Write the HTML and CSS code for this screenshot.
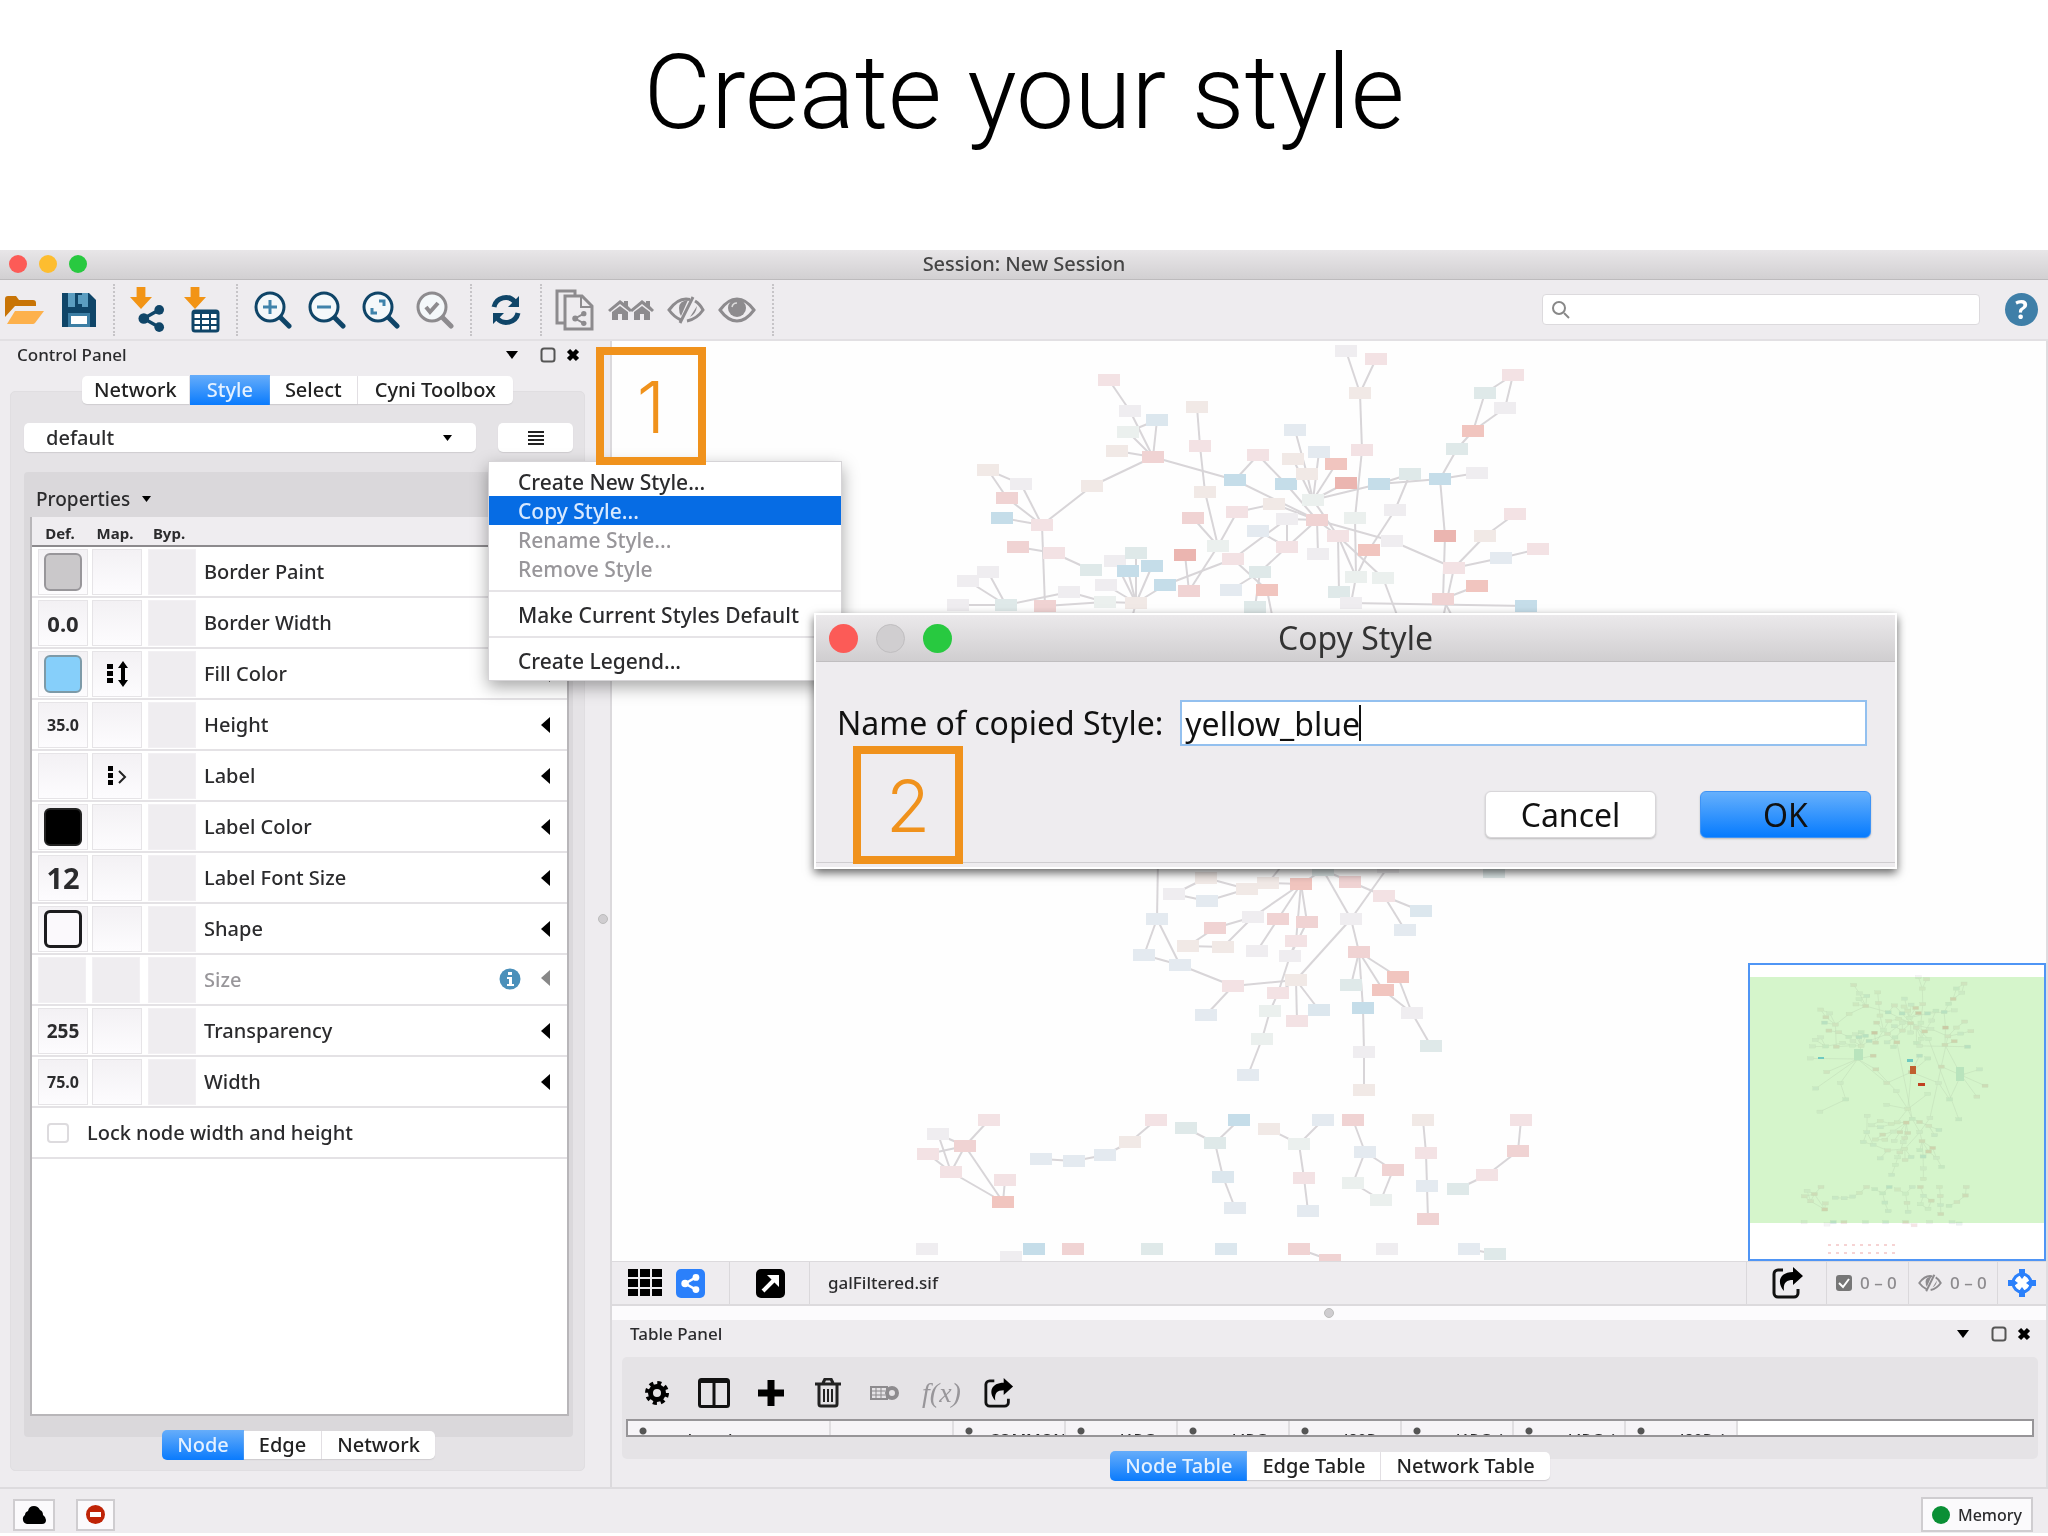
FILE: index.html
```html
<!DOCTYPE html>
<html lang="en">
<head>
<meta charset="utf-8">
<title>Create your style</title>
<link rel="stylesheet" href="styles.css">
</head>
<body>
<svg class="defs" aria-hidden="true">
  <defs>
    <symbol id="i-down" viewBox="0 0 12 8"><path d="M0 0h12L6 8z"/></symbol>
    <symbol id="i-left" viewBox="0 0 9 16"><path d="M9 0v16L0 8z"/></symbol>
    <symbol id="i-float" viewBox="0 0 16 16"><rect x="1.500" y="1.500" width="13" height="13" rx="2.500" fill="none" stroke="#555" stroke-width="2"/></symbol>
    <symbol id="i-close" viewBox="0 0 14 14"><path d="M2.500 2.500l9 9M11.500 2.500l-9 9" stroke="#000" stroke-width="4.500"/></symbol>
    <symbol id="i-lens" viewBox="0 0 38 38"><circle cx="16" cy="16" r="14" fill="#f4f8fa" stroke="currentColor" stroke-width="3"/><path d="M27 27l8 8" stroke="currentColor" stroke-width="5" stroke-linecap="round"/></symbol>
    <symbol id="i-eye" viewBox="0 0 38 26"><path d="M2 13Q10 2 19 2t17 11Q28 24 19 24T2 13z" fill="none" stroke="currentColor" stroke-width="3"/><circle cx="19" cy="11" r="9" fill="currentColor"/><path d="M14 10a5 5 0 0 1 5-4" fill="none" stroke="#ddd" stroke-width="1.500"/></symbol>
    <symbol id="i-eyeoff" viewBox="0 0 38 28"><path d="M14 24Q7 21 2 14 10 3 19 3l4 .5" fill="none" stroke="currentColor" stroke-width="3"/><path d="M28 5Q33 8 36 14 30 23 20 25" fill="none" stroke="currentColor" stroke-width="3"/><path d="M21 4q-9 1-9 8 0 5 2 8zM30 10q-1 8-7 11z" fill="currentColor"/><path d="M26 1L13 27" stroke="currentColor" stroke-width="3"/></symbol>
    <symbol id="i-export" viewBox="0 0 32 32"><path d="M11 3H6a4 4 0 0 0-4 4v19a4 4 0 0 0 4 4h16a4 4 0 0 0 4-4v-4" fill="none" stroke="#111" stroke-width="3"/><path d="M21 0l10 9-10 9v-5c-7 0-10 3-9 11-8-9-4-19 9-19z" fill="#000"/></symbol>
    <symbol id="i-share" viewBox="0 0 28 28"><path d="M22 5L6 14l16 9" fill="none" stroke="currentColor" stroke-width="3.500"/><circle cx="22" cy="5" r="5" fill="currentColor"/><circle cx="6" cy="14" r="5.500" fill="currentColor"/><circle cx="22" cy="23" r="5" fill="currentColor"/></symbol>
    <symbol id="i-house" viewBox="0 0 24 20"><path d="M0 10L12 0l4 3V1h4v5l4 4-2 2L12 4 2 12z"/><path d="M4 12l8-6 8 6v8h-6v-6h-4v6H4z"/></symbol>
    <symbol id="i-arrow" viewBox="0 0 20 20"><path d="M6 0h8v9h6L10 20 0 9h6z" fill="#f29415"/></symbol>
  </defs>
</svg>

<main class="slide">
  <h1 class="slide-title">Create your style</h1>

  <section class="app" aria-label="Session: New Session">
    <header class="titlebar">
      <div class="lights"><i class="light red"></i><i class="light amber"></i><i class="light green"></i></div>
      <span class="titlebar-text">Session: New Session</span>
    </header>

    <div class="toolbar">
      <div class="tools tools-file">
        <button class="tool" aria-label="Open"><svg width="40" height="30"><path d="M1 22V4q0-3 3-3h8l3 4h14q3 0 3 3v3H11z" fill="#c87406"/><path d="M3 29l8-13h29l-9 12q-1 1-2 1z" fill="#fdb14c"/></svg></button>
        <button class="tool" aria-label="Save"><svg width="36" height="36"><path d="M1 1h27l7 7v27H1z" fill="#0f4568"/><path d="M7 1h20v14H7z" fill="#5b9dc0"/><path d="M14 1h7v14h-7z" fill="#0f4568"/><path d="M17 3h4v9h-4z" fill="#5b9dc0"/><path d="M7 21h22v14H7z" fill="#3c7ea4"/><path d="M10 24h16v8H10z" fill="#fff"/></svg></button>
      </div>
      <div class="tools">
        <button class="tool" aria-label="Import network"><svg width="36" height="46"><use href="#i-arrow" width="22" height="22"/><use href="#i-share" x="8" y="18" width="27" height="27" color="#0f4568"/></svg></button>
        <button class="tool" aria-label="Import table"><svg width="36" height="46"><use href="#i-arrow" width="22" height="22"/><rect x="9" y="24" width="25" height="20" rx="2" fill="#fff" stroke="#0f4568" stroke-width="3"/><path d="M9 26h25M9 32h25M9 38h25M17 25v19M26 25v19" stroke="#0f4568" stroke-width="2"/></svg></button>
      </div>
      <div class="tools">
        <button class="tool navy" aria-label="Zoom in"><svg width="38" height="38"><use href="#i-lens"/><path d="M16 9v14M9 16h14" stroke="#3f83ab" stroke-width="3"/></svg></button>
        <button class="tool navy" aria-label="Zoom out"><svg width="38" height="38"><use href="#i-lens"/><path d="M9 16h14" stroke="#3f83ab" stroke-width="3"/></svg></button>
        <button class="tool navy" aria-label="Zoom to fit"><svg width="38" height="38"><use href="#i-lens"/><path d="M17 10h5v5M10 17v5h5" fill="none" stroke="#3f83ab" stroke-width="3"/></svg></button>
        <button class="tool gray" aria-label="Zoom selected"><svg width="38" height="38"><use href="#i-lens"/><path d="M10 16l4 5 8-9" fill="none" stroke="#8d8b8e" stroke-width="4"/></svg></button>
      </div>
      <div class="tools">
        <button class="tool navy" aria-label="Refresh"><svg width="30" height="30"><path d="M3 12A12 12 0 0 1 24 7M27 18A12 12 0 0 1 6 23" fill="none" stroke="currentColor" stroke-width="5"/><path d="M28 1v11H17zM2 29V18h11z" fill="currentColor"/></svg></button>
      </div>
      <div class="tools">
        <button class="tool gray" aria-label="New network from selection"><svg width="40" height="42"><path d="M10 34H2V2h18v5" fill="none" stroke="currentColor" stroke-width="3"/><path d="M10 7h17l10 10v23H10z" fill="#eeecef" stroke="currentColor" stroke-width="3"/><path d="M26 8v10h11" fill="none" stroke="currentColor" stroke-width="2"/><use href="#i-share" x="17" y="22" width="15" height="15"/></svg></button>
        <button class="tool gray" aria-label="First neighbors"><svg width="46" height="22" fill="currentColor"><use href="#i-house" width="24" height="22"/><use href="#i-house" x="22" width="24" height="22"/></svg></button>
        <button class="tool gray" aria-label="Hide selected"><svg width="38" height="28"><use href="#i-eyeoff"/></svg></button>
        <button class="tool gray" aria-label="Show all"><svg width="38" height="26"><use href="#i-eye"/></svg></button>
      </div>
      <div class="toolbar-end">
        <label class="search"><svg width="20" height="20"><circle cx="8" cy="8" r="6" fill="none" stroke="#888" stroke-width="2"/><path d="M13 13l5 5" stroke="#888" stroke-width="2"/></svg><input type="search" aria-label="Search"></label>
        <button class="help" aria-label="Help">?</button>
      </div>
    </div>

    <div class="workspace">
      <aside class="control-panel">
        <div class="panel-head">
          <span>Control Panel</span>
          <span class="panel-tools"><svg width="12" height="8"><use href="#i-down"/></svg><svg class="float" width="16" height="16"><use href="#i-float"/></svg><svg width="14" height="14"><use href="#i-close"/></svg></span>
        </div>
        <nav class="tabs top-tabs">
          <button class="tab">Network</button><button class="tab active">Style</button><button class="tab">Select</button><button class="tab">Cyni Toolbox</button>
        </nav>
        <div class="group">
          <div class="style-row">
            <div class="combo"><select aria-label="Style"><option>default</option></select><svg width="9" height="6"><use href="#i-down"/></svg></div>
            <div class="menu-anchor">
              <button class="menu-button" aria-label="Options"><svg width="16" height="14"><path d="M0 1h16M0 5h16M0 9h16M0 13h16" stroke="#222" stroke-width="2"/></svg></button>
              <div class="popup" role="menu">
                <button role="menuitem">Create New Style...</button>
                <button role="menuitem" class="selected">Copy Style...</button>
                <button role="menuitem" disabled>Rename Style...</button>
                <button role="menuitem" disabled>Remove Style</button>
                <hr>
                <button role="menuitem">Make Current Styles Default</button>
                <hr>
                <button role="menuitem">Create Legend...</button>
              </div>
            </div>
          </div>

          <div class="properties">
            <div class="properties-head">Properties <svg width="9" height="6"><use href="#i-down"/></svg></div>
            <div class="list">
              <table class="props">
                <thead><tr><th>Def.</th><th>Map.</th><th>Byp.</th><th></th><th></th></tr></thead>
                <tbody>
                  <tr><td><span class="cell"><i class="swatch silver"></i></span></td><td><span class="cell"></span></td><td><span class="cell flat"></span></td><td>Border Paint</td><td><svg width="9" height="16"><use href="#i-left"/></svg></td></tr>
                  <tr><td><span class="cell n20">0.0</span></td><td><span class="cell"></span></td><td><span class="cell flat"></span></td><td>Border Width</td><td><svg width="9" height="16"><use href="#i-left"/></svg></td></tr>
                  <tr><td><span class="cell"><i class="swatch sky"></i></span></td><td><span class="cell"><svg width="24" height="26"><path d="M2 3h6v5H2zM2 10h6v5H2zM2 17h6v5H2zM13 7l5-7 5 7h-3v12h3l-5 7-5-7h3V7z"/></svg></span></td><td><span class="cell flat"></span></td><td>Fill Color</td><td><svg width="9" height="16"><use href="#i-left"/></svg></td></tr>
                  <tr><td><span class="cell n16">35.0</span></td><td><span class="cell"></span></td><td><span class="cell flat"></span></td><td>Height</td><td><svg width="9" height="16"><use href="#i-left"/></svg></td></tr>
                  <tr><td><span class="cell"></span></td><td><span class="cell"><svg width="22" height="22"><path d="M2 1h5v5H2zM2 8h5v5H2zM2 15h5v5H2z"/><path d="M13 6l6 6-6 6" fill="none" stroke="#222" stroke-width="2"/></svg></span></td><td><span class="cell flat"></span></td><td>Label</td><td><svg width="9" height="16"><use href="#i-left"/></svg></td></tr>
                  <tr><td><span class="cell"><i class="swatch black"></i></span></td><td><span class="cell"></span></td><td><span class="cell flat"></span></td><td>Label Color</td><td><svg width="9" height="16"><use href="#i-left"/></svg></td></tr>
                  <tr><td><span class="cell n26">12</span></td><td><span class="cell"></span></td><td><span class="cell flat"></span></td><td>Label Font Size</td><td><svg width="9" height="16"><use href="#i-left"/></svg></td></tr>
                  <tr><td><span class="cell"><i class="swatch outline"></i></span></td><td><span class="cell"></span></td><td><span class="cell flat"></span></td><td>Shape</td><td><svg width="9" height="16"><use href="#i-left"/></svg></td></tr>
                  <tr class="off"><td><span class="cell flat"></span></td><td><span class="cell flat"></span></td><td><span class="cell flat"></span></td><td>Size</td><td><svg class="info" width="22" height="22"><circle cx="11" cy="11" r="10.500" fill="#4b90ba"/><path d="M9 4h4v3H9zM8 9h5v7h2v2H8v-2h2v-5H8z" fill="#fff"/></svg><svg width="9" height="16"><use href="#i-left"/></svg></td></tr>
                  <tr><td><span class="cell n18">255</span></td><td><span class="cell"></span></td><td><span class="cell flat"></span></td><td>Transparency</td><td><svg width="9" height="16"><use href="#i-left"/></svg></td></tr>
                  <tr><td><span class="cell n16">75.0</span></td><td><span class="cell"></span></td><td><span class="cell flat"></span></td><td>Width</td><td><svg width="9" height="16"><use href="#i-left"/></svg></td></tr>
                </tbody>
              </table>
              <label class="lock"><input type="checkbox"> Lock node width and height</label>
            </div>
          </div>
          <nav class="tabs bottom-tabs">
            <button class="tab active">Node</button><button class="tab">Edge</button><button class="tab">Network</button>
          </nav>
        </div>
        <i class="grip grip-v"></i>
      </aside>

      <div class="main">
        <div class="canvas">
          <svg class="network" viewBox="612 342 1434 920" preserveAspectRatio="xMinYMin slice"><g id="graph"></g></svg>
          <div class="overview">
            <svg viewBox="0 0 294 294"><rect y="12" width="294" height="246" fill="#d5f5cb"/><use href="#graph" class="mini" transform="translate(-199 -84) scale(.273)"/><path d="M160 101h6v8h-6z" fill="#c06030"/><path d="M168 118h7v3h-7z" fill="#c04020"/><path d="M157 94h6v3h-6zM68 92h6v2h-6z" fill="#6fc9c0"/><path d="M206 102h8v14h-8zM104 84h9v11h-9z" fill="#b9e4bd"/><path d="M78 280h70M78 288h70" stroke="#f6d3d3" stroke-width="2" stroke-dasharray="3 5"/></svg>
          </div>
        </div>
        <div class="network-bar">
          <div class="bar-seg views">
            <button class="tool" aria-label="Grid"><svg width="34" height="28"><path d="M0 0h10v8H0zM12 0h10v8H12zM24 0h10v8H24zM0 10h10v8H0zM12 10h10v8H12zM24 10h10v8H24zM0 20h10v7H0zM12 20h10v7H12zM24 20h10v7H24z"/></svg></button>
            <button class="tool" aria-label="View"><svg width="29" height="29"><rect width="29" height="29" rx="5" fill="#2b80fb"/><use href="#i-share" x="5" y="5" width="19" height="19" color="#fff"/></svg></button>
          </div>
          <div class="bar-seg detach"><button class="tool" aria-label="Detach"><svg width="29" height="29"><rect width="29" height="29" rx="5"/><path d="M7 22L18 11" stroke="#fff" stroke-width="4"/><path d="M11 6h12v12z" fill="#fff"/></svg></button></div>
          <span class="network-name">galFiltered.sif</span>
          <div class="bar-seg export"><button class="tool" aria-label="Export"><svg width="32" height="32"><use href="#i-export"/></svg></button></div>
          <div class="bar-seg counts"><svg width="16" height="16"><rect width="16" height="16" rx="3" fill="#777"/><path d="M3 8l4 4 6-8" fill="none" stroke="#fff" stroke-width="2"/></svg><span>0 – 0</span></div>
          <div class="bar-seg counts hidden-counts"><svg width="24" height="18"><use href="#i-eyeoff"/></svg><span>0 – 0</span></div>
          <div class="bar-seg target"><button class="tool" aria-label="Birds eye"><svg width="30" height="30"><circle cx="15" cy="15" r="9" fill="#fff" stroke="#2b80fb" stroke-width="3"/><path d="M12 1h6v6l-3 4-3-4zM12 29h6v-6l-3-4-3 4zM1 12v6h6l4-3-4-3zM29 12v6h-6l-4-3 4-3z" fill="#2b80fb"/></svg></button></div>
        </div>
        <div class="splitter"><i class="grip"></i></div>

        <section class="table-panel">
          <div class="panel-head">
            <span>Table Panel</span>
            <span class="panel-tools"><svg width="12" height="8"><use href="#i-down"/></svg><svg class="float" width="16" height="16"><use href="#i-float"/></svg><svg width="14" height="14"><use href="#i-close"/></svg></span>
          </div>
          <div class="table-group">
            <div class="table-tools">
              <button class="tool" aria-label="Settings"><svg width="24" height="24"><circle cx="12" cy="12" r="6.500" fill="none" stroke="#000" stroke-width="5"/><circle cx="12" cy="12" r="10" fill="none" stroke="#000" stroke-width="4" stroke-dasharray="4 3.850"/></svg></button>
              <button class="tool" aria-label="Columns"><svg width="32" height="30"><rect x="1.500" y="1.500" width="29" height="27" rx="2" fill="none" stroke="#111" stroke-width="3"/><path d="M1 3h30" stroke="#111" stroke-width="4"/><path d="M16 3v26" stroke="#111" stroke-width="3"/></svg></button>
              <button class="tool" aria-label="Add"><svg width="26" height="26"><path d="M13 0v26M0 13h26" stroke="#000" stroke-width="7"/></svg></button>
              <button class="tool" aria-label="Delete"><svg width="26" height="30"><path d="M0 6h26M8 5l2-4h6l2 4M4 7v19q0 2 2 2h14q2 0 2-2V7" fill="none" stroke="#222" stroke-width="3"/><path d="M9 11v13M13 11v13M17 11v13" stroke="#222" stroke-width="2"/></svg></button>
              <button class="tool gray" aria-label="Delete table"><svg width="30" height="14"><rect x="1" y="1" width="16" height="12" fill="none" stroke="currentColor" stroke-width="2"/><path d="M1 5h14M1 9h14M6 1v12M11 1v12" stroke="currentColor"/><circle cx="22" cy="7" r="5" fill="#e5e3e6" stroke="currentColor" stroke-width="4"/></svg></button>
              <button class="tool fx">f(x)</button>
              <button class="tool" aria-label="Export table"><svg width="32" height="30"><use href="#i-export"/></svg></button>
            </div>
            <div class="sheet">
              <table>
                <thead><tr><th class="c-name">shared name</th><th class="c-blank"></th><th class="c-col">COMMON</th><th class="c-col">gal1RG</th><th class="c-col">gal4RG</th><th class="c-col">gal80R</th><th class="c-col">gal1RGsig</th><th class="c-col">gal4RGsig</th><th class="c-col">gal80Rsig</th><th class="c-rest"></th></tr></thead>
              </table>
            </div>
          </div>
          <nav class="tabs table-tabs">
            <button class="tab active">Node Table</button><button class="tab">Edge Table</button><button class="tab">Network Table</button>
          </nav>
        </section>
      </div>
    </div>

    <footer class="statusbar">
      <button class="status-button" aria-label="Cloud"><svg width="24" height="18"><path d="M5 18a5 5 0 0 1-2-9q0-3 3-4 1-5 6-5 4 0 6 4 3 1 3 5 3 2 3 5 0 4-4 4z"/></svg></button>
      <button class="status-button" aria-label="Tasks"><svg width="19" height="19"><circle cx="9.500" cy="9.500" r="9.500" fill="#bf2306"/><path d="M4 7h11v5H4z" fill="#fff"/></svg></button>
      <button class="status-button memory"><i class="dot"></i>Memory</button>
    </footer>

    <div class="dialog" role="dialog" aria-label="Copy Style">
      <header class="dialog-title">
        <div class="lights big"><i class="light red"></i><i class="light idle"></i><i class="light green"></i></div>
        <span>Copy Style</span>
      </header>
      <form class="dialog-body">
        <div class="field"><label for="style-name">Name of copied Style:</label><div class="entry"><input id="style-name" type="text" value="yellow_blue"><i class="caret"></i></div></div>
        <div class="actions"><button type="button" class="push">Cancel</button><button type="button" class="push primary">OK</button></div>
      </form>
    </div>
    <div class="callout one">1</div>
    <div class="callout two">2</div>
  </section>
</main>
<script src="graph.js"></script>
</body>
</html>
```

FILE: styles.css
```css
* { box-sizing: border-box; }
body { margin: 0; background: #fff; color: #2b2b2d; font: 500 20px/24px "Noto Sans", "Open Sans", sans-serif; }
button, input, select { font: inherit; color: inherit; margin: 0; padding: 0; border: 0; background: none; }
svg { display: block; flex: none; }
.defs { position: absolute; width: 0; height: 0; }

.slide { min-height: 100vh; display: flex; flex-direction: column; padding-bottom: 3px; overflow: hidden; }
.slide-title { margin: 0; height: 250px; padding-top: 33px; text-align: center; font: 300 104px/120px Roboto, "Liberation Sans", sans-serif; color: #000; }

.app { flex: 1; position: relative; display: flex; flex-direction: column; background: #eeecef; }

.titlebar { height: 30px; display: grid; grid-template-columns: 1fr auto 1fr; align-items: center; padding: 0 9px 2px; background: linear-gradient(#e8e6e8, #d2d0d2); border-bottom: 1px solid #bdbbbd; }
.titlebar-text { color: #444; }
.lights { display: flex; gap: 12px; }
.light { width: 18px; height: 18px; border-radius: 50%; }
.red { background: #fc5b57; }
.amber { background: #fdbd2f; }
.green { background: #28c940; }
.idle { background: #d0ced0; border: 1px solid #c0bec0; }
.big { gap: 18px; }
.big .light { width: 29px; height: 29px; }

.toolbar { height: 61px; display: flex; align-items: center; border-bottom: 2px solid #e2e0e3; }
.tools { height: 52px; display: flex; align-items: center; gap: 16px; padding: 0 16px; border-right: 2px dotted #c6c4c7; }
.tools-file { padding-left: 4px; gap: 17px; }
.tool { display: block; }
.tools:nth-child(2) { gap: 18px; padding: 0 16px 0 15px; }
.tools:nth-child(4) { padding: 0 19px; }
.tools:nth-child(5) { gap: 13px; padding: 0 16px 0 13px; }
.navy { color: #0f4568; }
.gray { color: #8d8b8e; }
.toolbar-end { margin-left: auto; display: flex; align-items: center; gap: 25px; padding-right: 10px; }
.search { width: 438px; height: 31px; display: flex; align-items: center; gap: 8px; padding: 0 8px; background: #fff; border: 1px solid #dcdadd; border-radius: 4px; }
.search input { flex: 1; min-width: 0; outline: 0; }
.help { width: 33px; height: 33px; border-radius: 50%; background: #3f7fa8; color: #fff; font-weight: 700; font-size: 26px; line-height: 33px; }

.workspace { flex: 1; display: grid; grid-template-columns: 612px 1fr; }
.control-panel { position: relative; display: flex; flex-direction: column; padding: 0 25px 16px 10px; border-right: 2px solid #dbd9dc; }
.panel-head { height: 34px; display: flex; align-items: center; justify-content: space-between; padding: 0 5px 6px 7px; font-size: 17px; }
.panel-tools { display: flex; align-items: center; gap: 10px; }
.float { margin-left: 12px; }

.tabs { position: relative; z-index: 1; height: 30px; display: flex; justify-content: center; align-items: center; }
.tab { height: 28px; padding: 0 15px; background: #fff; border-right: 1px solid #e4e2e5; box-shadow: 0 1px 1px #cfcdd0; color: #222; line-height: 26px; }
.tab:first-child { border-radius: 5px 0 0 5px; }
.tab:last-child { border-radius: 0 5px 5px 0; border-right: 0; }
.tab.active { height: 30px; background: linear-gradient(#66adfa, #0a7bfd); color: #e4f1ff; border: 0; box-shadow: none; }
.top-tabs .tab:first-child { padding: 0 12px; }
.top-tabs .tab.active, .top-tabs .tab:last-child { padding: 0 17px; }
.bottom-tabs { margin-top: -7px; }

.group { flex: 1; display: flex; flex-direction: column; margin-top: -14px; padding: 31px 11px 10px 13px; background: #e5e3e6; border: 1px solid #e0dee1; border-radius: 5px; }
.style-row { display: flex; justify-content: space-between; gap: 22px; height: 29px; }
.combo { flex: 1; display: flex; align-items: center; background: #fff; border-radius: 5px; padding: 0 24px 0 22px; box-shadow: 0 1px 1px #cfcdd0; }
.combo select { flex: 1; appearance: none; outline: 0; }
.menu-anchor { position: relative; width: 75px; }
.menu-button { width: 100%; height: 29px; display: grid; place-items: center; background: #fff; border-radius: 5px; box-shadow: 0 1px 1px #cfcdd0; }
.popup { position: absolute; z-index: 3; top: 38px; left: -10px; width: 354px; padding: 5px 0; background: #fff; border: 1px solid #d6d4d7; box-shadow: 0 6px 16px rgba(0,0,0,.35); font-size: 21px; }
.popup button { display: block; width: 100%; height: 29px; padding-left: 29px; text-align: left; line-height: 28px; white-space: nowrap; }
.popup .selected { background: #066ce4; color: #d8e9ff; }
.popup button:disabled { color: #98969a; }
.popup hr { margin: 7px 0 8px; border: 0; border-top: 2px solid #e6e4e7; }

.properties { flex: 1; display: flex; flex-direction: column; margin-top: 20px; padding: 0 4px 21px 6px; background: #dad8db; border-radius: 4px; }
.properties-head { height: 45px; display: flex; align-items: center; gap: 12px; padding: 8px 6px 0; font-size: 19px; }
.list { flex: 1; background: #fff; border: 2px solid #b8b6b9; border-top: 0; }
.props { width: 100%; border-collapse: collapse; table-layout: fixed; }
.props th { height: 29px; padding: 4px 4px 0 0; font-size: 15px; line-height: 20px; background: #efedf0; border-bottom: 2px solid #8c8a8d; }
.props th:nth-child(1) { width: 58px; padding-left: 2px; }
.props th:nth-child(2) { width: 54px; }
.props th:nth-child(3) { width: 54px; }
.props th:nth-child(5) { width: 80px; }
.props td { height: 51px; padding: 0; border-bottom: 2px solid #e4e2e5; }
.props td:nth-child(1) { padding-left: 6px; }
.props td:nth-child(2) { padding-left: 2px; }
.props td:nth-child(3) { padding-left: 4px; }
.props td:nth-child(4) { padding-left: 6px; }
.props td:nth-child(5) > svg { float: right; margin-right: 17px; }
.props td:nth-child(5) > .info { float: left; margin: -2px 0 0 12px; }
.cell { width: 50px; height: 46px; display: grid; place-items: center; font-weight: 700; border: 1px solid #e6e4e7; background: linear-gradient(#f3f1f4, #fdfcfe); }
.flat { width: 48px; background: #efedf0; border-color: #f2f0f3; }
.n16 { font-size: 16px; }
.n18 { font-size: 19px; }
.n20 { font-size: 22px; }
.n26 { font-size: 29px; }
.swatch { width: 38px; height: 38px; border-radius: 6px; border: 2px solid #98969a; }
.silver { background: #cac8ca; }
.sky { background: #86cffa; border-color: #7d9aa8; }
.black { background: #000; border-color: #222; }
.outline { background: #fbf9fc; border: 3px solid #1c1c1e; }
.off { color: #98969a; fill: #888; }
.lock { height: 51px; display: flex; align-items: center; gap: 18px; padding-left: 15px; border-bottom: 2px solid #e4e2e5; }
.lock input { appearance: none; width: 22px; height: 20px; border: 2px solid #dddbde; border-radius: 4px; background: #fff; }
.grip { width: 10px; height: 10px; border-radius: 50%; background: #cfcdd0; border: 1px solid #bbb; }
.grip-v { position: absolute; right: 2px; top: 50%; }

.main { display: flex; flex-direction: column; min-width: 0; border-right: 2px solid #dfdde0; }
.canvas { flex: 1; position: relative; overflow: hidden; background: #fefefe; }
.network { position: absolute; inset: 0; width: 100%; height: 100%; }
.network line { stroke: #d8d5d8; stroke-width: 2; }
.overview { position: absolute; right: 0; bottom: 0; width: 298px; height: 298px; border: 2px solid #4f95f5; background: #fff; overflow: hidden; }
.overview svg { width: 100%; height: 100%; }
.mini { opacity: .6; mix-blend-mode: multiply; stroke: #d8d5d8; }

.network-bar { height: 45px; display: flex; align-items: stretch; border-top: 1px solid #dcdadd; border-bottom: 2px solid #dcdadd; }
.bar-seg { display: flex; align-items: center; border-right: 1px solid #dad8db; }
.views { gap: 14px; padding: 0 24px 0 16px; }
.detach { padding: 0 24px 0 26px; }
.network-name { flex: 1; align-self: center; padding-left: 18px; font-size: 17px; }
.export { width: 81px; padding-left: 25px; border-left: 1px solid #dad8db; }
.counts { width: 82px; gap: 8px; padding-left: 9px; color: #8d8b8e; font-size: 17px; white-space: nowrap; }
.hidden-counts { width: 89px; }
.target { width: 48px; padding-left: 9px; border: 0; }
.splitter { height: 14px; display: grid; place-items: center; background: #fcfbfd; }

.table-panel { padding: 0 8px 6px 10px; }
.table-group { height: 102px; padding: 14px 4px 0; background: #e5e3e6; border-radius: 5px; }
.table-panel .panel-head { height: 37px; padding: 0 7px 10px 8px; }
.table-tools { height: 48px; display: flex; align-items: center; padding: 0 0 4px 2px; }
.table-tools .tool { width: 57px; display: grid; place-items: center; }
.table-tools .fx { font: italic 28px/30px "Liberation Serif", serif; color: #98969a; }
.sheet { height: 18px; overflow: hidden; background: #fff; border: 2px solid #979598; }
.sheet table { width: 100%; table-layout: fixed; border-collapse: collapse; }
.sheet th { padding: 7px 0 0 35px; text-align: left; font-size: 16px; line-height: 24px; font-weight: 500; white-space: nowrap; overflow: hidden; border-right: 2px solid #e0dee1; background: radial-gradient(circle at 15px 10px, #555 0 3px, transparent 4px) #f6f4f7; }
.c-name { width: 202px; }
.sheet .c-name { padding-left: 52px; }
.c-blank { width: 123px; }
.sheet .c-blank { background: #f6f4f7; }
.c-col { width: 112px; }
.sheet .c-rest { background: #fff; border: 0; }
.table-tabs { margin-top: -8px; }

.statusbar { height: 46px; display: flex; align-items: center; gap: 21px; padding: 7px 15px 0 13px; border-top: 2px solid #dddbde; }
.status-button { height: 32px; min-width: 39px; display: flex; align-items: center; justify-content: center; gap: 8px; padding: 0 7px; background: #fbfafc; border: 2px solid #cfcdd0; }
.memory { margin-left: auto; height: 35px; padding: 0 9px; font-size: 16px; }
.dot { width: 18px; height: 18px; border-radius: 50%; background: #0a8f35; }

.dialog { position: absolute; z-index: 4; left: 814px; top: 363px; width: 1083px; padding-bottom: 4px; background: #eeecef; border: 2px solid #fff; box-shadow: 0 4px 9px rgba(0,0,0,.6); font-weight: 400; }
.dialog-title { height: 47px; display: grid; grid-template-columns: 1fr auto 1fr; align-items: center; padding: 0 13px; background: linear-gradient(#ebe9eb, #d0ced0); border-bottom: 1px solid #c0bec0; font-size: 32px; color: #333; }
.dialog-body { padding: 38px 24px 24px 21px; font-size: 32px; line-height: 32px; border-bottom: 1px solid #cfcdd0; color: #111; }
.field { display: flex; align-items: center; gap: 17px; margin-right: 4px; }
.entry { flex: 1; position: relative; }
.entry input { width: 100%; height: 46px; padding: 0 3px; background: #fff; border: 2px solid #93c0ef; outline: 0; color: #111; }
.caret { position: absolute; left: 179px; top: 5px; width: 2px; height: 36px; background: #111; }
.actions { display: flex; justify-content: flex-end; gap: 44px; padding-top: 45px; }
.push { width: 171px; height: 47px; background: #fff; border: 1px solid #d8d6d9; border-radius: 6px; box-shadow: 0 1px 2px #bbb; color: #111; }
.primary { background: linear-gradient(#66b0fc, #067bfe); border-color: #3f93f5; }

.callout { position: absolute; z-index: 5; width: 110px; height: 118px; border: 8px solid #f0921c; color: #f0921c; text-align: center; font: 300 72px/104px Inter, sans-serif; }
.one { left: 596px; top: 97px; }
.two { left: 853px; top: 496px; }
```

FILE: graph.js
```js
// Node palette: key -> fill
const fills = {
  g: '#efedf0', l: '#e4eaf0', t: '#dfe9e9', m: '#ebf0ee', b: '#c5dde9', d: '#dce7ee',
  e: '#f1e9e6', p: '#f3e2e4', q: '#f0d3d3', r: '#ebb5b0', s: '#f1c5bf'
};

// id: "x y fill"
const nodes = {
  a1: '1109 381 p', a2: '1130 412 g', a3: '1157 421 d', a4: '1128 433 m', a5: '1117 452 e', a6: '1153 458 q',
  a7: '1092 487 e', a8: '1042 526 p', a9: '988 471 e', a10: '1021 485 g', a11: '1007 499 q', a12: '1002 519 b',
  a13: '1018 548 q', a14: '1054 554 p', a15: '1091 571 t', a16: '988 573 g', a17: '968 582 g', a18: '1006 606 t',
  a19: '958 606 g', a20: '1045 607 q', a21: '1069 593 g', a22: '1105 603 m', a23: '1106 586 g', a24: '1115 562 g',
  a25: '1136 554 t', a26: '1128 572 b', a27: '1152 567 b', a28: '1165 586 b', a29: '1136 604 e',
  b1: '1197 408 e', b2: '1200 447 p', b3: '1205 493 e', b4: '1218 547 m', b5: '1193 519 q', b6: '1237 513 p',
  b7: '1258 456 p', b8: '1235 481 b', b9: '1286 485 b', b10: '1295 431 l', b11: '1293 460 e', b12: '1319 453 l',
  b13: '1307 475 e', b14: '1336 465 s', b15: '1346 484 r', b16: '1379 485 b', b17: '1410 475 t', b18: '1440 480 b',
  b19: '1477 474 g', b20: '1457 450 t', b21: '1473 432 s', b22: '1505 409 g', b23: '1485 394 t', b24: '1513 376 p',
  b25: '1346 352 g', b26: '1376 360 p', b27: '1360 394 e', b28: '1362 451 p', b29: '1313 501 m', b30: '1274 505 e',
  b31: '1317 521 q', b32: '1287 520 g', b33: '1258 532 l', b34: '1287 548 p', b35: '1233 560 p', b36: '1185 556 r',
  b37: '1189 592 q', b38: '1260 573 t', b39: '1231 591 l', b40: '1267 591 s', b41: '1255 608 t', b42: '1318 555 g',
  b43: '1338 537 p', b44: '1355 519 m', b45: '1369 551 s', b46: '1392 542 g', b47: '1395 511 g', b48: '1356 578 m',
  b49: '1339 593 t', b50: '1383 579 m', b51: '1351 604 g', b52: '1445 537 r', b53: '1454 569 p', b54: '1515 515 p',
  b55: '1485 537 e', b56: '1501 559 l', b57: '1538 550 p', b58: '1477 587 s', b59: '1443 600 q', b60: '1526 607 b',
  c0: '1158 860 g', c1: '1206 879 e', c2: '1174 895 g', c3: '1207 902 l', c4: '1247 890 e', c5: '1268 884 e',
  c6: '1301 885 s', c7: '1323 871 t', c8: '1350 883 q', c9: '1384 897 p', c10: '1421 912 d', c11: '1405 931 l',
  c12: '1351 920 g', c13: '1157 920 l', c14: '1144 956 l', c15: '1180 966 l', c16: '1215 929 q', c17: '1188 947 e',
  c18: '1223 948 e', c19: '1253 918 g', c20: '1278 920 q', c21: '1307 923 q', c22: '1296 942 p', c23: '1257 952 g',
  c24: '1290 957 g', c25: '1296 981 e', c26: '1233 987 p', c27: '1206 1016 l', c28: '1278 994 p', c29: '1270 1012 m',
  c30: '1297 1022 p', c31: '1319 1011 d', c32: '1262 1040 m', c33: '1248 1076 l', c34: '1359 953 q', c35: '1351 986 t',
  c36: '1398 978 s', c37: '1383 991 s', c38: '1363 1009 b', c39: '1412 1014 g', c40: '1431 1047 t', c41: '1364 1053 g',
  c42: '1364 1091 e', c43: '1494 873 t', c44: '1388 868 g',
  d1: '1156 1121 p', d2: '1130 1143 e', d3: '1105 1156 l', d4: '1186 1129 t', d5: '1239 1121 b', d6: '1215 1144 t',
  d7: '1223 1178 d', d8: '1235 1209 l', d9: '1269 1130 e', d10: '1323 1121 l', d11: '1299 1145 m', d12: '1304 1179 p',
  d13: '1308 1212 l', d14: '1353 1121 q', d15: '1365 1153 l', d16: '1393 1171 q', d17: '1353 1184 m', d18: '1381 1201 m',
  d19: '1423 1121 e', d20: '1426 1154 p', d21: '1427 1187 l', d22: '1428 1220 q', d23: '1458 1190 t', d24: '1487 1176 p',
  d25: '1518 1152 q', d26: '1521 1121 p', e1: '989 1121 p', e2: '938 1135 g', e3: '965 1147 q', e4: '928 1155 p',
  e5: '951 1173 p', e6: '1005 1181 p', e7: '1003 1203 s', e8: '1041 1160 l', e9: '1074 1162 l',
  f1: '927 1250 g', f2: '1011 1258 g', f3: '1034 1250 b', f4: '1073 1250 q', f5: '1152 1250 t', f6: '1226 1250 d',
  f7: '1299 1250 q', f8: '1387 1250 g', f9: '1469 1250 l', f10: '1495 1255 t', f11: '1330 1261 q',
  h1: '1123 652 t', h2: '1502 711 t', h3: '1307 835 e', h4: '1010 700 p', h5: '970 760 l', h6: '985 845 g',
  h7: '1060 740 g', h8: '1080 800 t', h9: '1190 690 q', h10: '1230 740 p', h11: '1265 770 g', h12: '1320 700 r',
  h13: '1380 650 t', h14: '1420 740 g', h15: '1570 690 l', h16: '1590 750 q', h17: '1560 790 p', h18: '1460 800 t',
  h19: '1430 680 q', h20: '1380 780 m', h21: '1230 820 g', h22: '950 650 g', h23: '1350 640 b', h24: '1180 640 s'
};

const edges = `a1-a2 a2-a6 a3-a4 a3-a6 a4-a6 a5-a6 a6-a7 a7-a8 a9-a11 a9-a10 a10-a8 a11-a8 a12-a8 a8-a20 a13-a14
a14-a15 a16-a18 a17-a18 a19-a18 a18-a21 a20-a22 a21-a22 a22-a29 a23-a29 a24-a29 a25-a29 a26-a29 a27-a29 a28-a29
b1-b2 b2-b3 b3-b4 b5-b4 b6-b4 b4-b37 b36-b37 a6-b8 b8-b31 b7-b8 b7-b9 b9-b31 b10-b13 b13-b29 b12-b29 b11-b29
b14-b29 b15-b29 b16-b29 b29-b43 b30-b31 b30-b6 b31-b32 b31-b42 b31-b34 b31-b46 b31-b43 b32-b34 b33-b34 b32-b35
b34-b38 b35-b40 b35-a28 b38-b39 b38-b41 b16-b18 b17-b16 b17-b47 b47-b45 b18-b20 b18-b19 b20-b21 b21-b22 b21-b23
b23-b24 b22-b24 b18-b52 b52-b59 b46-b53 b53-b55 b55-b54 b53-b56 b56-b57 b43-b48 b43-b50 b45-b48 b58-b59 b51-b60
b25-b27 b26-b27 b27-b28 b28-b44 b44-b48 b43-b49 b48-b51 b53-c44 b40-c7 b50-c43
c0-c13 c1-c2 c2-c3 c3-c4 c1-c4 c4-c5 c5-c6 c6-c7 c6-c19 c6-c20 c6-c21 c6-c22 c19-c16 c16-c17 c17-c18 c18-c19
c20-c23 c21-c24 c24-c28 c22-c24 c28-c29 c25-c28 c29-c32 c32-c33 c25-c30 c25-c31 c25-c26 c26-c27 c26-c15 c15-c13
c13-c14 c14-c15 c12-c25 c7-c12 c12-c34 c12-c44 c9-c10 c9-c11 c7-c9 c34-c35 c34-c36 c34-c37 c34-c38 c38-c41
c41-c42 c36-c39 c37-c39 c39-c40 d1-d2 d2-d3 d3-e9 e8-e9 d4-d6 d5-d6 d6-d7 d7-d8 d9-d11 d10-d11 d11-d12 d12-d13
d14-d15 d15-d16 d16-d18 d15-d17 d17-d18 d19-d20 d20-d21 d21-d22 d23-d24 d24-d25 d25-d26 e1-e3 e2-e3 e3-e4 e4-e5
e2-e5 e3-e5 e5-e7 e3-e7 e6-e7 f7-f11 f9-f10
h1-h22 h1-h4 h1-h5 h1-h7 h1-h9 h1-h10 h1-h24 h6-h8 h7-h8 h9-h11 h10-h12 h12-h23 h12-h13 h12-h14 h3-h11 h3-h12
h3-h20 h3-h21 h2-h15 h2-h16 h2-h17 h2-h18 h2-h19 h14-h18 h3-c7 h3-c5 h1-a29 h2-b59`;

const graph = document.getElementById('graph');
const add = (name, attrs) => {
  const el = document.createElementNS('http://www.w3.org/2000/svg', name);
  for (const key in attrs) el.setAttribute(key, attrs[key]);
  graph.append(el);
};
const at = id => nodes[id].split(' ');

edges.split(/\s+/).forEach(pair => {
  const [from, to] = pair.split('-').map(at);
  add('line', { x1: from[0], y1: from[1], x2: to[0], y2: to[1] });
});
Object.keys(nodes).forEach(id => {
  const [x, y, fill] = at(id);
  add('rect', { x: x - 11, y: y - 6, width: 22, height: 12, fill: fills[fill] });
});
```
